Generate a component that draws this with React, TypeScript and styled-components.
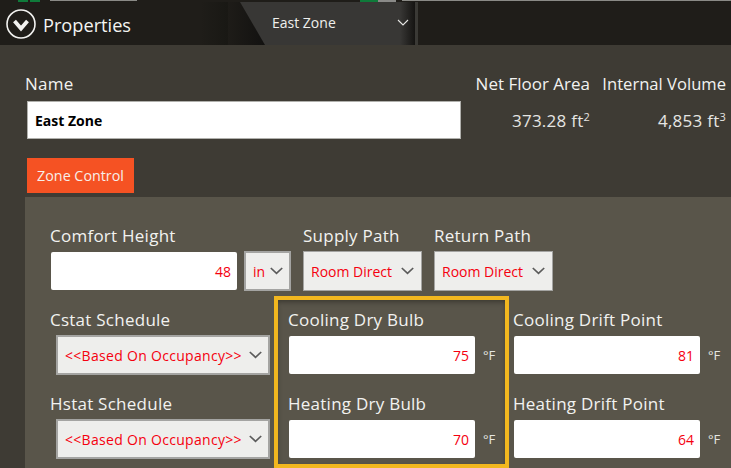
import React from "react";
import styled, { createGlobalStyle } from "styled-components";

const Global = createGlobalStyle`
  html, body { margin: 0; padding: 0; background: #3e3b34; overflow: hidden; }
  body { font-family: "Open Sans", "Noto Sans", "Liberation Sans", sans-serif; }
`;

const Page = styled.div`
  position: relative;
  width: 731px;
  height: 468px;
  overflow: hidden;
  background: #3e3b34;
  color: #f2f2f0;
`;

const TopStrip = styled.div`
  display: flex;
  height: 2px;
  background: #1f1d19;
`;

const StripBit = styled.span<{ $width: number; $gap: number; $color: string; $thin?: boolean }>`
  flex: none;
  width: ${(p) => p.$width}px;
  height: ${(p) => (p.$thin ? 1 : 2)}px;
  margin-left: ${(p) => p.$gap}px;
  background: ${(p) => p.$color};
`;

const Header = styled.header`
  display: flex;
  height: 43px;
  background: #1f1d19;
`;

const Title = styled.div`
  display: flex;
  align-items: center;
  gap: 7px;
  width: 228px;
  padding-left: 6px;
  box-sizing: border-box;
  font-size: 18.2px;
  color: #f4f4f2;
  background: linear-gradient(90deg, #1f1d19 88%, #191814 100%);
`;

const TitleText = styled.span`
  margin-top: 2px;
`;

const TabSlot = styled.div`
  width: 187px;
  height: 43px;
  background: linear-gradient(90deg, #1e1c18 0, #121110 20%);
`;

const Tab = styled.div`
  display: flex;
  align-items: center;
  justify-content: space-between;
  height: 43px;
  box-sizing: border-box;
  padding: 0 6px 2px 44px;
  font-size: 14px;
  color: #efefed;
  background: linear-gradient(90deg, #383735 92%, #151412 100%);
  clip-path: polygon(12px 0, 100% 0, 100% 100%, 37px 100%);
`;

const TabDivider = styled.div`
  width: 3px;
  height: 43px;
  background: #3a3935;
`;

const Body = styled.main`
  display: flex;
  flex-direction: column;
`;

const TopForm = styled.section`
  display: flex;
  padding: 28px 0 0 25px;
`;

const NameColumn = styled.div`
  display: flex;
  flex-direction: column;
  width: 450px;
`;

const FieldLabel = styled.div`
  font-size: 17px;
  letter-spacing: 0.25px;
  line-height: 22px;
  white-space: nowrap;
`;

const StatLabel = styled.div<{ $size: number }>`
  font-size: ${(p) => p.$size}px;
  line-height: 22px;
  white-space: nowrap;
`;

const NameInput = styled.div`
  display: flex;
  align-items: center;
  width: 434px;
  height: 38px;
  margin: 6px 0 0 2px;
  padding-left: 7px;
  box-sizing: border-box;
  background: #fff;
  border: 1px solid #b0b0ac;
  color: #000;
  font-size: 14px;
  font-weight: 700;
`;

const Stat = styled.div<{ $width: number }>`
  display: flex;
  flex-direction: column;
  align-items: flex-end;
  width: ${(p) => p.$width}px;
  flex: none;
`;

const StatValue = styled.div`
  margin-top: 15px;
  font-size: 17px;
  letter-spacing: 0.25px;
  line-height: 22px;
  color: #e6e6e3;
  white-space: nowrap;
  sup {
    font-size: 11px;
    line-height: 0;
    vertical-align: 6px;
  }
`;

const ControlTab = styled.div`
  display: flex;
  align-items: center;
  justify-content: center;
  width: 107px;
  height: 35px;
  margin: 19px 0 0 27px;
  background: #f55223;
  font-size: 14.3px;
  color: #f7eee9;
`;

const Panel = styled.section`
  display: flex;
  flex-direction: column;
  margin: 4px 0 0 25px;
  padding-top: 28px;
  background: #59554a;
  height: 271px;
  box-sizing: border-box;
`;

const Row = styled.div<{ $top?: number }>`
  display: flex;
  margin-top: ${(p) => p.$top ?? 0}px;
  padding-left: 25px;
`;

const Field = styled.div<{ $width: number }>`
  display: flex;
  flex-direction: column;
  flex: none;
  width: ${(p) => p.$width}px;
`;

const Controls = styled.div<{ $indent?: number }>`
  display: flex;
  align-items: center;
  height: 40px;
  margin-top: 4px;
  margin-left: ${(p) => p.$indent ?? 0}px;
`;

const NumberBox = styled.div`
  display: flex;
  align-items: center;
  justify-content: flex-end;
  flex: none;
  width: 186px;
  height: 38px;
  padding-right: 6px;
  box-sizing: border-box;
  background: #fff;
  border-radius: 2px;
  color: #f5000f;
  font-size: 14px;
`;

const SelectBox = styled.div<{ $width: number; $thick?: boolean; $gap?: number; $spacing?: number }>`
  display: flex;
  align-items: center;
  justify-content: space-between;
  flex: none;
  width: ${(p) => p.$width}px;
  height: 40px;
  margin-left: ${(p) => p.$gap ?? 0}px;
  padding: 0 ${(p) => (p.$thick ? 6 : 7)}px 0 7px;
  box-sizing: border-box;
  background: #eeeeec;
  border: ${(p) => (p.$thick ? 2 : 1)}px solid #a4a4a2;
  color: #f5000f;
  font-size: 14px;
  letter-spacing: ${(p) => p.$spacing ?? 0}px;
  white-space: nowrap;
`;

const Unit = styled.span`
  margin-left: 8px;
  font-size: 13px;
  color: #e6e6e3;
`;

const Highlight = styled.div`
  position: absolute;
  left: 274px;
  top: 296px;
  width: 235px;
  height: 172px;
  box-sizing: border-box;
  border: 4px solid #f2b71f;
  box-shadow: inset 0 3px 5px -1px rgba(40, 38, 32, 0.6);
  pointer-events: none;
`;

const Chevron = () => (
  <svg width="13" height="8" viewBox="0 0 13 8" fill="none" style={{ flex: "none" }}>
    <path d="M0.8 1 L6.5 6.3 L12.2 1" stroke="#5b5b5b" strokeWidth="1.7" />
  </svg>
);

const TabChevron = () => (
  <svg width="12" height="7" viewBox="0 0 12 7" fill="none" style={{ flex: "none" }}>
    <path d="M1 1 L6 6 L11 1" stroke="#e4e4e2" strokeWidth="1.1" />
  </svg>
);

const CollapseIcon = () => (
  <svg width="30" height="30" viewBox="0 0 30 30" fill="none" style={{ flex: "none" }}>
    <circle cx="15" cy="15" r="14" stroke="#f2f2f0" strokeWidth="1.6" />
    <path d="M8.5 12 L15 19.5 L21.5 12" stroke="#f2f2f0" strokeWidth="3.8" />
  </svg>
);

export default function App() {
  return (
    <Page>
      <Global />
      <TopStrip>
        <StripBit $width={10} $gap={18} $color="#0f7a3a" />
        <StripBit $width={10} $gap={2} $color="#0f7a3a" />
        <StripBit $width={87} $gap={10} $color="#8a8a86" $thin />
        <StripBit $width={18} $gap={223} $color="#0f7a3a" />
        <StripBit $width={18} $gap={0} $color="#8a8a88" />
        <StripBit $width={329} $gap={6} $color="#8a8a86" $thin />
      </TopStrip>
      <Header>
        <Title>
          <CollapseIcon />
          <TitleText>Properties</TitleText>
        </Title>
        <TabSlot>
          <Tab>
            East Zone
            <TabChevron />
          </Tab>
        </TabSlot>
        <TabDivider />
      </Header>
      <Body>
        <TopForm>
          <NameColumn>
            <FieldLabel>Name</FieldLabel>
            <NameInput>East Zone</NameInput>
          </NameColumn>
          <Stat $width={115}>
            <StatLabel $size={17}>Net Floor Area</StatLabel>
            <StatValue>
              373.28 ft<sup>2</sup>
            </StatValue>
          </Stat>
          <Stat $width={136}>
            <StatLabel $size={16.6}>Internal Volume</StatLabel>
            <StatValue>
              4,853 ft<sup>3</sup>
            </StatValue>
          </Stat>
        </TopForm>
        <ControlTab>Zone Control</ControlTab>
        <Panel>
          <Row>
            <Field $width={253}>
              <FieldLabel>Comfort Height</FieldLabel>
              <Controls $indent={1}>
                <NumberBox>48</NumberBox>
                <SelectBox $width={47} $thick $gap={7}>
                  in
                  <Chevron />
                </SelectBox>
              </Controls>
            </Field>
            <Field $width={131}>
              <FieldLabel>Supply Path</FieldLabel>
              <Controls>
                <SelectBox $width={119}>
                  Room Direct
                  <Chevron />
                </SelectBox>
              </Controls>
            </Field>
            <Field $width={119}>
              <FieldLabel>Return Path</FieldLabel>
              <Controls>
                <SelectBox $width={119}>
                  Room Direct
                  <Chevron />
                </SelectBox>
              </Controls>
            </Field>
          </Row>
          <Row $top={18}>
            <Field $width={238}>
              <FieldLabel>Cstat Schedule</FieldLabel>
              <Controls $indent={6}>
                <SelectBox $width={214} $thick $spacing={0.3}>
                  {"<<Based On Occupancy>>"}
                  <Chevron />
                </SelectBox>
              </Controls>
            </Field>
            <Field $width={225}>
              <FieldLabel>Cooling Dry Bulb</FieldLabel>
              <Controls $indent={1}>
                <NumberBox>75</NumberBox>
                <Unit>°F</Unit>
              </Controls>
            </Field>
            <Field $width={218}>
              <FieldLabel>Cooling Drift Point</FieldLabel>
              <Controls $indent={1}>
                <NumberBox>81</NumberBox>
                <Unit>°F</Unit>
              </Controls>
            </Field>
          </Row>
          <Row $top={18}>
            <Field $width={238}>
              <FieldLabel>Hstat Schedule</FieldLabel>
              <Controls $indent={6}>
                <SelectBox $width={214} $thick $spacing={0.3}>
                  {"<<Based On Occupancy>>"}
                  <Chevron />
                </SelectBox>
              </Controls>
            </Field>
            <Field $width={225}>
              <FieldLabel>Heating Dry Bulb</FieldLabel>
              <Controls $indent={1}>
                <NumberBox>70</NumberBox>
                <Unit>°F</Unit>
              </Controls>
            </Field>
            <Field $width={218}>
              <FieldLabel>Heating Drift Point</FieldLabel>
              <Controls $indent={1}>
                <NumberBox>64</NumberBox>
                <Unit>°F</Unit>
              </Controls>
            </Field>
          </Row>
        </Panel>
      </Body>
      <Highlight />
    </Page>
  );
}
